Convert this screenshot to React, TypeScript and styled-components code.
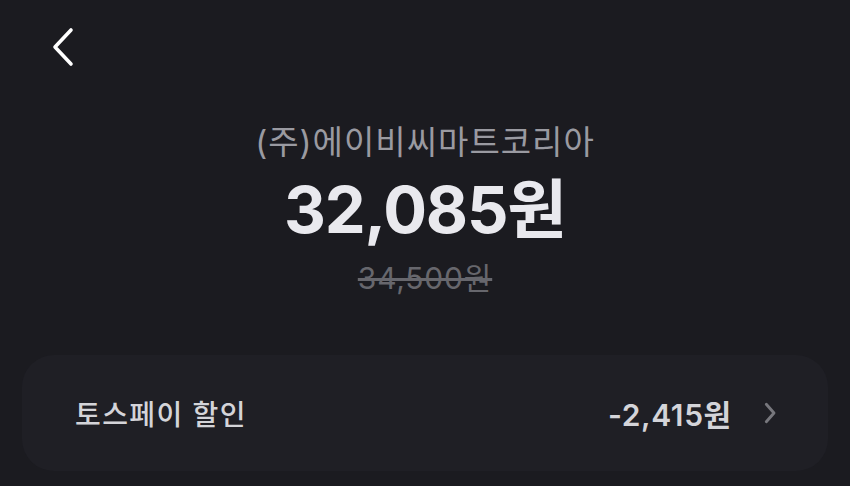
import React from "react";
import styled, { createGlobalStyle } from "styled-components";

const GlobalStyle = createGlobalStyle`
  html, body {
    margin: 0;
    padding: 0;
    background: #1b1b20;
  }
  body {
    font-family: Inter, "Noto Sans CJK KR", "Noto Sans", sans-serif;
    -webkit-font-smoothing: antialiased;
  }
`;

const Page = styled.div`
  width: 850px;
  height: 486px;
  box-sizing: border-box;
  background: #1b1b20;
  display: flex;
  flex-direction: column;
  overflow: hidden;
`;

const Header = styled.div`
  height: 92px;
  padding: 26px 0 0 48px;
  box-sizing: border-box;
`;

const BackButton = styled.button`
  width: 30px;
  height: 42px;
  padding: 0;
  border: none;
  background: transparent;
  display: flex;
  align-items: center;
  justify-content: center;
  cursor: pointer;
`;

const Summary = styled.div`
  display: flex;
  flex-direction: column;
  align-items: center;
`;

const Merchant = styled.div`
  font-size: 33px;
  line-height: 44px;
  height: 44px;
  color: #9a9aa1;
  letter-spacing: 1px;
  margin-top: 28px;
`;

const Price = styled.div`
  font-size: 65px;
  font-weight: 700;
  line-height: 78px;
  height: 78px;
  color: #e9e9ee;
  letter-spacing: -1.2px;
  margin-top: 7px;
`;

const OriginalPrice = styled.div`
  font-size: 30px;
  line-height: 36px;
  height: 36px;
  color: #67676d;
  letter-spacing: 0.8px;
  text-decoration: line-through;
  text-decoration-thickness: 2.5px;
  margin-top: 11px;
`;

const Card = styled.div`
  margin: 59px 22px 0 22px;
  height: 116px;
  flex-shrink: 0;
  border-radius: 32px;
  background: #1f1f25;
  display: flex;
  align-items: center;
  justify-content: space-between;
  padding: 0 52px 0 53px;
  box-sizing: border-box;
`;

const Label = styled.span`
  font-size: 28px;
  font-weight: 500;
  color: #d4d4d9;
  letter-spacing: 1.4px;
`;

const Right = styled.div`
  display: flex;
  align-items: center;
  gap: 31px;
`;

const Amount = styled.span`
  font-size: 30px;
  font-weight: 600;
  color: #d4d4d9;
  letter-spacing: 0.6px;
`;

const Chevron = ({ size, color, width }: { size: number; color: string; width: number }) => (
  <svg width={size * 0.6} height={size} viewBox="0 0 12 20" fill="none">
    <path
      d="M3 2 L10 10 L3 18"
      stroke={color}
      strokeWidth={width}
      strokeLinecap="round"
      strokeLinejoin="round"
    />
  </svg>
);

const BackChevron = () => (
  <svg width="24" height="40" viewBox="0 0 24 40" fill="none">
    <path
      d="M20 3 L4 20 L20 37"
      stroke="#ffffff"
      strokeWidth="3.6"
      strokeLinecap="round"
      strokeLinejoin="round"
    />
  </svg>
);

export default function App() {
  return (
    <>
      <GlobalStyle />
      <Page>
        <Header>
          <BackButton aria-label="뒤로">
            <BackChevron />
          </BackButton>
        </Header>
        <Summary>
          <Merchant>(주)에이비씨마트코리아</Merchant>
          <Price>32,085원</Price>
          <OriginalPrice>34,500원</OriginalPrice>
        </Summary>
        <Card>
          <Label>토스페이 할인</Label>
          <Right>
            <Amount>-2,415원</Amount>
            <Chevron size={22} color="#77777d" width={2.6} />
          </Right>
        </Card>
      </Page>
    </>
  );
}
